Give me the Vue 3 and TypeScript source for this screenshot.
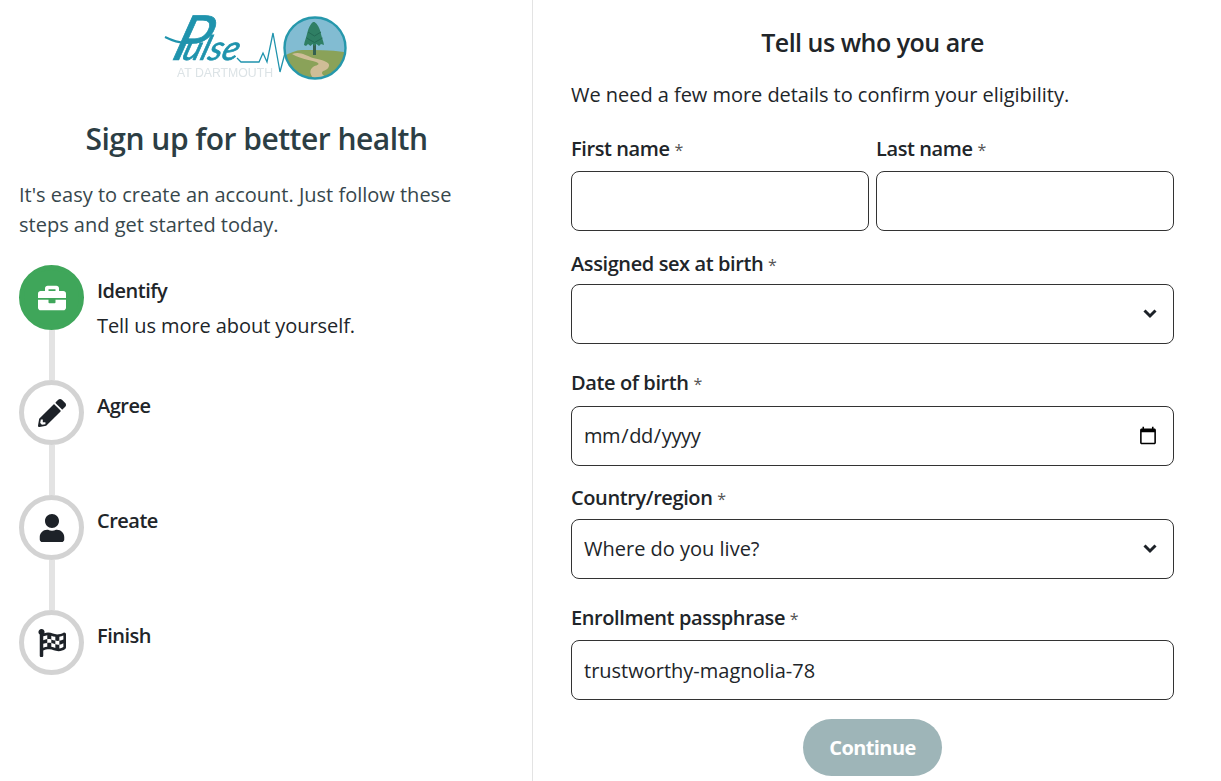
<template>
  <div class="page">
    <section class="intro">
      <svg class="logo" viewBox="150 0 210 90" width="210" height="90" role="img" aria-label="Pulse at Dartmouth">
        <text transform="translate(170 60) skewX(-18)" class="logo-word"><tspan class="logo-cap">P</tspan><tspan dx="-24">ulse</tspan></text>
        <text x="177" y="77" class="logo-sub" textLength="96" lengthAdjust="spacingAndGlyphs">AT DARTMOUTH</text>
        <path d="M165 37c10 5 20 8 30 4" class="logo-swash" />
        <polyline class="logo-pulse" points="237,58 241,62 259,62 263,53 267,62 273,33 280,72 285,53" />
        <defs>
          <clipPath id="logo-clip"><circle cx="315" cy="48" r="30.5" /></clipPath>
        </defs>
        <g clip-path="url(#logo-clip)">
          <rect x="284" y="17" width="62" height="62" fill="#82bcd2" />
          <path d="M284 56c6-3 12-6 18-6 14 0 28 0 42 2l2 27h-62z" fill="#8aa259" />
          <path d="M292 54c8-3 13 1 21 4 9 2 17 4 16 8-1 5-7 4-7 7 0 2 4 4 8 5h-17c-3-4-4-8 0-11 3-2 7-2 5-4-4-3-16-3-26-9z" fill="#cfbd97" />
          <rect x="313" y="40" width="3" height="15" fill="#35604f" />
          <path d="M314.5 22c3 2 5 6 6 10 1 5 3 9 3.5 13l-3-1-2 2-2.5-2-2 2-2-2-2 2-2.5-2-2 2-2-1c.5-4 2.500-8 3.500-13 1-4 3-8 5.500-10z" fill="#2f7f64" />
          <path d="M308 32l6.500 4 6.500-4M306.500 38l8 4.500 8-4.500" fill="none" stroke="#246a55" stroke-width="1" />
        </g>
        <circle cx="315" cy="48" r="30.5" fill="none" stroke="#2698ac" stroke-width="2.4" />
      </svg>

      <h1>Sign up for better health</h1>
      <p class="lead">It's easy to create an account. Just follow these steps and get started today.</p>

      <ol class="steps">
        <li v-for="(step, i) in steps" :key="step.title" class="step">
          <div class="marker">
            <div class="circle" :class="{ active: i === 0 }">
              <svg :viewBox="step.viewBox" :width="step.size" :height="step.size" fill="currentColor">
                <path :d="step.icon" />
              </svg>
            </div>
            <div v-if="i < steps.length - 1" class="line"></div>
          </div>
          <div class="step-text">
            <div class="step-title">{{ step.title }}</div>
            <div v-if="step.desc" class="step-desc">{{ step.desc }}</div>
          </div>
        </li>
      </ol>
    </section>

    <section class="form-side">
      <h2>Tell us who you are</h2>
      <p class="form-intro">We need a few more details to confirm your eligibility.</p>

      <form @submit.prevent>
        <div class="name-row">
          <div>
            <label for="first">First name <i>*</i></label>
            <input id="first" type="text" />
          </div>
          <div>
            <label for="last">Last name <i>*</i></label>
            <input id="last" type="text" />
          </div>
        </div>

        <div class="field sex">
          <label for="sex">Assigned sex at birth <i>*</i></label>
          <div class="select-wrap">
            <select id="sex"><option></option></select>
            <svg class="chevron" viewBox="0 0 14 10" width="14" height="10"><path d="M1.5 1.5l5.5 5.5 5.5-5.5" /></svg>
          </div>
        </div>

        <div class="field dob">
          <label for="dob">Date of birth <i>*</i></label>
          <input id="dob" type="date" />
        </div>

        <div class="field country">
          <label for="country">Country/region <i>*</i></label>
          <div class="select-wrap">
            <select id="country"><option>Where do you live?</option></select>
            <svg class="chevron" viewBox="0 0 14 10" width="14" height="10"><path d="M1.5 1.5l5.5 5.5 5.5-5.5" /></svg>
          </div>
        </div>

        <div class="field phrase">
          <label for="phrase">Enrollment passphrase <i>*</i></label>
          <input id="phrase" type="text" value="trustworthy-magnolia-78" />
        </div>

        <div class="actions">
          <button type="submit" disabled>Continue</button>
        </div>
      </form>
    </section>
  </div>
</template>

<script setup lang="ts">
interface Step {
  title: string;
  desc?: string;
  viewBox: string;
  size: number;
  icon: string;
}

const steps: Step[] = [
  {
    title: "Identify",
    desc: "Tell us more about yourself.",
    viewBox: "0 0 512 512",
    size: 28,
    icon: "M320 336c0 8.84-7.16 16-16 16h-96c-8.84 0-16-7.16-16-16v-48H0v144c0 25.6 22.4 48 48 48h416c25.6 0 48-22.4 48-48V288H320v48zm144-208h-80V80c0-25.6-22.4-48-48-48H176c-25.6 0-48 22.4-48 48v48H48c-25.6 0-48 22.4-48 48v80h512v-80c0-25.6-22.4-48-48-48zm-144 0H192V96h128v32z",
  },
  {
    title: "Agree",
    viewBox: "0 0 512 512",
    size: 28,
    icon: "M497.9 142.1l-46.1 46.1c-4.7 4.7-12.3 4.7-17 0l-111-111c-4.7-4.7-4.7-12.3 0-17l46.1-46.1c18.7-18.7 49.1-18.7 67.9 0l60.1 60.1c18.8 18.7 18.8 49.1 0 67.9zM284.2 99.8L21.6 362.4.4 483.9c-2.9 16.4 11.4 30.6 27.8 27.8l121.5-21.3 262.6-262.6c4.7-4.7 4.7-12.3 0-17l-111-111c-4.8-4.7-12.4-4.7-17.1 0zM88 424h48v36.3l-64.5 11.3-31.1-31.1L51.7 376H88v48z",
  },
  {
    title: "Create",
    viewBox: "0 0 448 512",
    size: 28,
    icon: "M224 256c70.7 0 128-57.3 128-128S294.7 0 224 0 96 57.3 96 128s57.3 128 128 128zm89.6 32h-16.7c-22.2 10.2-46.9 16-72.9 16s-50.6-5.8-72.9-16h-16.7C60.2 288 0 348.2 0 422.4V464c0 26.5 21.5 48 48 48h352c26.5 0 48-21.5 48-48v-41.6c0-74.2-60.2-134.4-134.4-134.4z",
  },
  {
    title: "Finish",
    viewBox: "0 0 512 512",
    size: 28,
    icon: "M243.2 189.9V258c26.1 5.9 49.3 15.6 73.6 22.3v-68.2c-26-5.8-49.4-15.5-73.6-22.2zm223.3-123c-34.3 15.9-76.5 31.9-117 31.9C296 98.8 251.7 64 184.3 64c-25 0-47.3 4.4-68 12 2.8-7.3 4.1-15.2 3.6-23.6C118.1 24 94.8 1.2 66.3 0 34.3-1.3 8 24.3 8 56c0 19 9.5 35.8 24 45.9V488c0 13.3 10.7 24 24 24h16c13.3 0 24-10.7 24-24v-94.4c28.3-12.1 63.6-22.1 114.4-22.1 53.6 0 97.8 34.8 165.2 34.8 48.2 0 86.7-16.3 122.5-40.9 8.7-6 13.8-15.8 13.8-26.4V95.9c.1-23.3-24.2-38.8-45.4-29zM169.6 325.5c-25.8 2.7-50 8.7-73.6 16.6v-70.5c26.1-9.3 47.3-14.2 73.6-17.4zM464 191c-23.6 9.8-46.3 19.5-73.6 23.9V286c24.8-3.4 51.4-11.8 73.6-26v70.5c-25.1 16.1-48.5 24.7-73.6 27.6V286c-27 3.7-47.9 1.5-73.6-5.6v67.4c-23.9-7.4-47.3-16.7-73.6-21.3V258c-19.7-4.4-40.8-6.8-73.6-3.8v-70c-22.4 3.1-44.6 10.2-73.6 20.9v-70.5c33.2-12.2 50.1-19.8 73.6-22v71.6c27-3.7 48.4-1.3 73.6 5.7v-67.4c23.7 7.4 47.2 16.7 73.6 21.3v68.4c23.7 5.3 47.6 6.9 73.6 2.7V143c27-4.8 52.3-13.6 73.6-22.5z",
  },
];
</script>

<style>
html,
body {
  margin: 0;
  background: #fff;
  overflow: hidden;
}
</style>

<style scoped>
.page {
  display: flex;
  height: 781px;
  overflow: hidden;
  color: #212529;
  font-family: "Open Sans", sans-serif;
  font-size: 20px;
  line-height: 30px;
}

.intro {
  width: 532px;
  box-sizing: content-box;
  border-right: 1px solid #e3e3e3;
  padding: 0;
}

.logo {
  display: block;
  margin-left: 150px;
  filter: blur(0.5px);
}

.logo-word {
  font-family: Lato, sans-serif;
  font-style: italic;
  font-size: 34px;
  font-weight: 400;
  fill: #1f93ad;
  stroke: #1f93ad;
  stroke-width: 0.7;
}

.logo-cap {
  font-size: 62px;
}

.logo-sub {
  font-family: "Liberation Sans", sans-serif;
  font-size: 12px;
  fill: #dce3e6;
}

.logo-swash,
.logo-pulse {
  fill: none;
  stroke: #1f93ad;
  stroke-width: 1.3;
}

.logo-swash {
  stroke-width: 2;
}

h1 {
  margin: 29px 0 0;
  padding: 0 38px 0 19px;
  font-size: 30px;
  line-height: 40px;
  font-weight: 600;
  letter-spacing: -0.5px;
  text-align: center;
  color: #2c3e44;
}

.lead {
  margin: 21px 0 0;
  padding: 0 38px 0 19px;
  color: #37474c;
}

.steps {
  list-style: none;
  margin: 25px 0 0;
  padding: 0 0 0 19px;
}

.step {
  display: flex;
  gap: 13px;
}

.marker {
  display: flex;
  flex-direction: column;
  align-items: center;
  width: 65px;
}

.circle {
  display: flex;
  align-items: center;
  justify-content: center;
  box-sizing: border-box;
  width: 65px;
  height: 65px;
  border: 5px solid #d3d3d3;
  border-radius: 50%;
  color: #1d2228;
  background: #fff;
}

.circle.active {
  border-color: #3fa65a;
  background: #3fa65a;
  color: #fff;
}

.line {
  width: 6px;
  height: 50px;
  background: #e3e3e3;
}

.step-text {
  padding-top: 11px;
}

.step-title {
  font-weight: 600;
  letter-spacing: -0.5px;
  color: #212529;
}

.step-desc {
  margin-top: 5px;
  letter-spacing: -0.07px;
}

.form-side {
  width: 603px;
  padding: 24px 0 0 38px;
}

h2 {
  margin: 0;
  font-size: 25px;
  line-height: 36px;
  font-weight: 600;
  letter-spacing: -0.5px;
  text-align: center;
  color: #212529;
}

.form-intro {
  margin: 20px 0 0;
  letter-spacing: -0.04px;
}

form {
  margin-top: 24px;
}

.name-row {
  display: grid;
  grid-template-columns: 298px 298px;
  gap: 7px;
}

label {
  display: block;
  margin-bottom: 7px;
  font-weight: 600;
  letter-spacing: -0.4px;
}

label i {
  font-style: normal;
  font-weight: 400;
  font-size: 16px;
  line-height: 1;
  letter-spacing: 0;
  color: #555;
}

input,
select {
  display: block;
  box-sizing: border-box;
  width: 100%;
  height: 60px;
  padding: 0 12px;
  border: 1px solid #333;
  border-radius: 8px;
  background: #fff;
  color: #212529;
  font: inherit;
  outline: none;
}

select {
  appearance: none;
}

input[type="date"] {
  padding-left: 11px;
  padding-right: 13px;
}

input[type="date"]::-webkit-datetime-edit {
  letter-spacing: -0.4px;
}

.select-wrap {
  position: relative;
}

.chevron {
  position: absolute;
  top: 25px;
  right: 17px;
  fill: none;
  stroke: #1d2228;
  stroke-width: 3;
}

.field {
  margin-top: 18px;
}

.sex label {
  margin-bottom: 5px;
}

.dob {
  margin-top: 24px;
}

.dob label {
  margin-bottom: 8px;
}

.country {
  margin-top: 17px;
}

.country label {
  margin-bottom: 6px;
}

.phrase {
  margin-top: 24px;
}

.actions {
  display: flex;
  justify-content: center;
  margin-top: 19px;
}

button {
  width: 139px;
  height: 57px;
  border: none;
  border-radius: 29px;
  background: #9eb5b8;
  color: #fff;
  font: inherit;
  font-weight: 700;
  letter-spacing: -0.6px;
}
</style>
